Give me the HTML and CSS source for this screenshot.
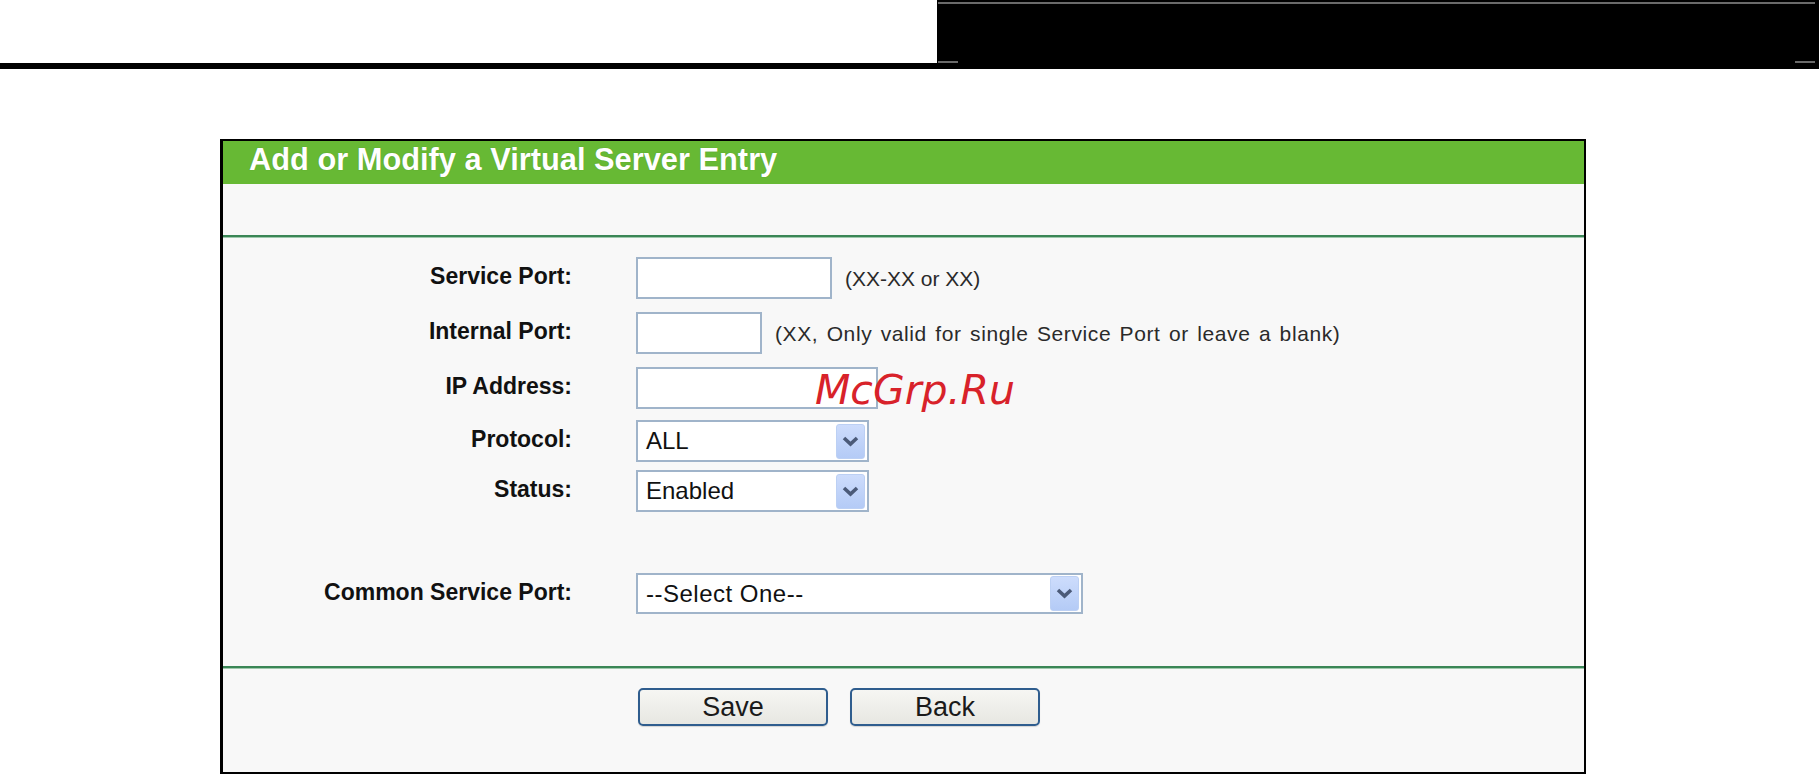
FILE: index.html
```html
<!DOCTYPE html>
<html lang="en">
<head>
<meta charset="utf-8">
<title>Add or Modify a Virtual Server Entry</title>
<link rel="stylesheet" href="styles.css">
</head>
<body>
<div class="topbar">
  <div class="topbar-left"></div>
  <div class="topbar-right">
    <div class="top-rule"></div>
    <div class="bottom-marks"><span class="mark"></span><span class="mark"></span></div>
  </div>
</div>

<div class="panel">
  <div class="panel-title">Add or Modify a Virtual Server Entry</div>
  <div class="panel-band"></div>
  <div class="panel-form">
    <div class="row row-service">
      <label class="lbl">Service Port:</label>
      <input class="field w-service" type="text">
      <span class="hint">(XX-XX or XX)</span>
    </div>
    <div class="row row-internal">
      <label class="lbl">Internal Port:</label>
      <input class="field w-internal" type="text">
      <span class="hint hint-long">(XX, Only valid for single Service Port or leave a blank)</span>
    </div>
    <div class="row row-ip">
      <label class="lbl">IP Address:</label>
      <input class="field w-ip" type="text">
    </div>
    <div class="row row-protocol">
      <label class="lbl">Protocol:</label>
      <div class="select w-select">
        <span class="select-value">ALL</span>
        <span class="select-arrow"><svg width="17" height="11" viewBox="0 0 17 11"><polyline points="2,2 8.5,8 15,2" fill="none" stroke="#4b5a78" stroke-width="3.6"/></svg></span>
      </div>
    </div>
    <div class="row row-status">
      <label class="lbl">Status:</label>
      <div class="select w-select">
        <span class="select-value">Enabled</span>
        <span class="select-arrow"><svg width="17" height="11" viewBox="0 0 17 11"><polyline points="2,2 8.5,8 15,2" fill="none" stroke="#4b5a78" stroke-width="3.6"/></svg></span>
      </div>
    </div>
    <div class="row row-common">
      <label class="lbl">Common Service Port:</label>
      <div class="select w-common">
        <span class="select-value value-wide">--Select One--</span>
        <span class="select-arrow"><svg width="17" height="11" viewBox="0 0 17 11"><polyline points="2,2 8.5,8 15,2" fill="none" stroke="#4b5a78" stroke-width="3.6"/></svg></span>
      </div>
    </div>
  </div>
  <div class="panel-buttons">
    <button class="btn" type="button">Save</button>
    <button class="btn" type="button">Back</button>
  </div>
</div>

<div class="watermark">McGrp.Ru</div>
</body>
</html>
```

FILE: styles.css
```css
html, body {
  margin: 0;
  padding: 0;
  background: #ffffff;
  font-family: "Liberation Sans", Arial, sans-serif;
  width: 1819px;
  height: 775px;
  overflow: hidden;
  position: relative;
}

/* top strip */
.topbar {
  display: flex;
  height: 69px;
}
.topbar-left {
  flex: 0 0 937px;
  height: 63px;
  border-bottom: 6px solid #000;
}
.topbar-right {
  flex: 1 1 auto;
  background: #000;
  display: flex;
  flex-direction: column;
  padding: 2px 4px 6px 1px;
}
.top-rule {
  height: 2px;
  background: #6a6a6a;
}
.bottom-marks {
  margin-top: auto;
  display: flex;
  justify-content: space-between;
}
.mark {
  display: block;
  width: 20px;
  height: 2px;
  background: #6a6a6a;
}

/* panel */
.panel {
  box-sizing: border-box;
  margin: 70px 0 0 220px;
  width: 1366px;
  height: 635px;
  border: 2px solid #000;
  border-left-width: 3px;
  background: #f8f8f8;
  display: flex;
  flex-direction: column;
}
.panel-title {
  height: 43px;
  line-height: 37px;
  padding: 0 0 6px 26px;
  box-sizing: border-box;
  background: #67b934;
  color: #ffffff;
  font-weight: bold;
  font-size: 30.8px;
  white-space: nowrap;
  text-shadow: 0 0 1px rgba(40, 80, 20, 0.35);
}
.panel-band {
  height: 51px;
}
.panel-form {
  border-top: 2px solid #3a8656;
  box-shadow: inset 0 1px 0 #9fc9ad;
  height: 431px;
  box-sizing: border-box;
  padding-top: 20px;
  display: flex;
  flex-direction: column;
}
.row {
  display: flex;
  align-items: center;
  height: 42px;
}
.row-internal { margin-top: 13px; }
.row-ip { margin-top: 13px; }
.row-protocol { margin-top: 11px; }
.row-status { margin-top: 8px; }
.row-common { margin-top: 61px; height: 41px; }

.lbl {
  flex: 0 0 349px;
  text-align: right;
  font-weight: bold;
  font-size: 23px;
  color: #111;
  margin-right: 64px;
  white-space: nowrap;
  padding-bottom: 3px;
}

.field {
  box-sizing: border-box;
  height: 42px;
  border: 2px solid #a0b4ca;
  background: #ffffff;
  margin: 0;
  padding: 0 8px;
  font-family: "Liberation Sans", Arial, sans-serif;
  font-size: 24px;
}
.w-service { width: 196px; }
.w-internal { width: 126px; }
.w-ip { width: 242px; }

.hint {
  margin-left: 13px;
  font-size: 21px;
  color: #2a2a2a;
  white-space: nowrap;
  padding-top: 2px;
}
.hint-long {
  letter-spacing: 0.6px;
  word-spacing: 2px;
}

.select {
  box-sizing: border-box;
  height: 42px;
  border: 2px solid #a0b4ca;
  background: #ffffff;
  display: flex;
  align-items: center;
  padding: 1px 2px 1px 8px;
}
.row-common .select { height: 41px; }
.w-select { width: 233px; }
.w-common { width: 447px; }
.select-value {
  flex: 1 1 auto;
  font-size: 24px;
  color: #111;
  white-space: nowrap;
}
.value-wide { letter-spacing: 0.5px; }
.select-arrow {
  flex: 0 0 29px;
  height: 35px;
  box-sizing: border-box;
  border: 1px solid #bcd0f4;
  border-radius: 3px;
  background: linear-gradient(#cddcfc, #b4cbf6);
  display: flex;
  align-items: center;
  justify-content: center;
}
.select-arrow svg { display: block; }

.panel-buttons {
  border-top: 2px solid #3a8656;
  box-shadow: inset 0 1px 0 #9fc9ad;
  flex: 1 1 auto;
  display: flex;
  gap: 22px;
  padding: 20px 0 0 415px;
  align-items: flex-start;
}
.btn {
  box-sizing: border-box;
  width: 190px;
  height: 38px;
  border: 2px solid #2f5d8e;
  border-radius: 5px;
  background: linear-gradient(#f6f6f3, #e7e7e2);
  box-shadow: 0 1px 1px rgba(0,0,0,0.15);
  font-family: "Liberation Sans", Arial, sans-serif;
  font-size: 27px;
  color: #1a1a1a;
  padding: 0;
  line-height: 32px;
}

/* watermark overlay */
.watermark {
  position: absolute;
  left: 815px;
  top: 370px;
  font-family: "DejaVu Sans", sans-serif;
  font-style: oblique;
  font-size: 41px;
  line-height: 40px;
  color: #d8222a;
  white-space: nowrap;
}
```
